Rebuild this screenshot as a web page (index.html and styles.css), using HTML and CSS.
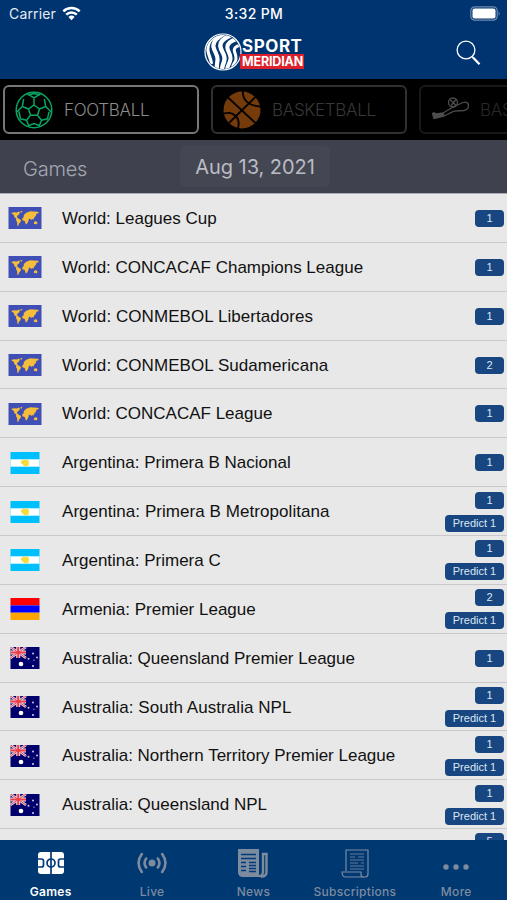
FILE: index.html
```html
<!DOCTYPE html>
<html lang="en">
<head>
<meta charset="utf-8">
<title>Sport Meridian</title>
<link rel="stylesheet" href="styles.css">
</head>
<body>
<svg class="defs" width="0" height="0" aria-hidden="true">
  <defs>
    <symbol id="world" viewBox="0 0 33 22">
      <path fill="#3f4fb5" d="M0 0h33v22H0z"/>
      <path fill="#f5bd3a" d="M2.500 6l3-.8 3 .3 1.500-1 1.500 1-1 2-1.700 1.200-.3 1.200 1.700 1.800 2.300 1.200-.5 2-1.500 1.800-.7 2.300-.9-.3-.3-3.800-1.200-1.900.5-1.400-1.800-1.200-.8-2.400zM11.500 4.500l2.500-.7-1.200 2.200zM15 9l1.200-2 2-1.500 3.800-1.300 3 .3 4.500.3 1 1.200-2.500.8-.7 2.200-1.500 1.500-1 2.200-1-.6-1.200 1-1.200-1.500-1 .5-.6 2.300-1.500 2.500-1 .5-1.100-3.300-2.300-.8-.2-1.800 1.700-1.600zM25.500 15l2-1 1.500 1.700-.6 1.800-1.400-.6-1.600.2z"/>
    </symbol>
    <symbol id="argentina" viewBox="0 0 29 22">
      <path fill="#00bfff" d="M0 0h29v22H0z"/><path fill="#fff" d="M0 7.300h29v7.400H0z"/>
      <path fill="#f7dc3b" d="M10.500 9l3-1.500 3.500.2 1.500 1.800-.3 3.700-2.700 1.200-2.300-.6-1-1.300-1.700-1.300z"/>
    </symbol>
    <symbol id="armenia" viewBox="0 0 29 22">
      <path fill="#f00" d="M0 0h29v7.400H0z"/><path fill="#00f" d="M0 7.400h29v7.300H0z"/><path fill="#ffa500" d="M0 14.700h29V22H0z"/>
    </symbol>
    <symbol id="australia" viewBox="0 0 29 22">
      <path fill="#00006d" d="M0 0h29v22H0z"/>
      <path stroke="#e6d9e8" stroke-width="2.600" d="M0 0l15.500 11M15.500 0L0 11"/>
      <path stroke="#e6d9e8" stroke-width="4" d="M7.700 0v11M0 5.500h15.500"/>
      <path stroke="#ee3e45" stroke-width="1" d="M0 0l15.500 11M15.500 0L0 11"/>
      <path stroke="#ee3e45" stroke-width="2" d="M7.700 0v11M0 5.500h15.500"/>
      <g fill="#fff"><circle cx="10.500" cy="17" r="2.300"/><g fill="#c9c9e6"><circle cx="22.500" cy="6.500" r="1"/><circle cx="18" cy="11.800" r="1"/><circle cx="26.500" cy="10.500" r="1"/><circle cx="23.500" cy="13.200" r=".6"/><circle cx="22.500" cy="19" r="1.100"/></g></g>
    </symbol>
  </defs>
</svg>
<div class="screen">
  <header class="top">
    <div class="status">
      <div class="carrier"><span>Carrier</span>
        <svg width="19" height="15" viewBox="0 0 19 15" fill="none" stroke="#fff" stroke-width="2.500"><path d="M1.300 5.400a11.800 11.800 0 0 1 16.400 0M4.200 8.600a7.600 7.600 0 0 1 10.600 0"/><path fill="#fff" stroke="none" d="M6.400 11a4.600 4.600 0 0 1 6.200 0L9.500 14.200z"/></svg>
      </div>
      <div class="time">3:32 PM</div>
      <svg class="battery" width="31" height="15" viewBox="0 0 31 15"><rect x=".8" y=".8" width="26.400" height="13.400" rx="4" fill="none" stroke="#6f8bb0" stroke-width="1.200"/><rect x="2.500" y="2.500" width="23" height="10" rx="2" fill="#fff"/><path d="M28.600 5.200q2 2.300 0 4.600z" fill="#6f8bb0"/></svg>
    </div>
    <div class="brandbar">
      <div class="brand">
        <svg class="globe" width="38" height="38" viewBox="0 0 38 38">
          <defs><clipPath id="ball"><circle cx="19" cy="19" r="17"/></clipPath></defs>
          <circle cx="19" cy="19" r="18" fill="#063570" stroke="#fff" stroke-width="1.200"/>
          <g clip-path="url(#ball)" fill="none" stroke="#fff">
            <path stroke-width="3.200" d="M14 1C6 6 3 12 4 18s3 7 3.500 13"/>
            <path stroke-width="4.200" d="M21 0C12 5 8.500 9 9.500 14s4.500 8 4 13-1 6-.5 10"/>
            <path stroke-width="4.400" d="M27 2C19 6 15.500 9 16.500 14s4.500 7 4 12-3 7-2.500 12"/>
            <path stroke-width="4" d="M33 6c-7 2-10.500 5-9.500 9.500s3.500 6 3 10.500-3.500 6-3.500 12"/>
            <path stroke-width="3" d="M37 12c-5 1-7.500 3-6.500 6.500s2 5 1.300 8.500-3.300 4-3.300 8"/>
          </g>
        </svg>
        <div class="wordmark"><span class="sport">SPORT</span><span class="meridian">MERIDIAN</span></div>
      </div>
      <svg class="search" width="25" height="26" viewBox="0 0 25 26" fill="none" stroke="#fff"><circle cx="10" cy="10" r="8.900" stroke-width="1.300"/><path stroke-width="1.300" d="M16 16.500l2 2"/><path stroke-width="2.300" d="M17 17.500l6.500 6.700"/></svg>
    </div>
  </header>
  <nav class="sports">
    <div class="sport-card active">
      <svg width="38" height="38" viewBox="0 0 38 38" fill="none" stroke="#07a563" stroke-width="1.500"><circle cx="19" cy="19" r="17.800"/><path d="M19 14l5.500 4-2 6.300h-7l-2-6.300zM19 14V6.800M24.500 18l6.200-2.500M22.500 24.300l4 5M15.500 24.300l-4 5M13.500 18l-6.200-2.500M12.500 2.800L19 6.800l6.500-4M13 4l6-1.500L25 4M30.700 15.500L29.300 8M30.700 15.500l5.500 5.500M7.300 15.500L8.700 8M7.300 15.500L1.800 21M26.500 29.300l6-1.500 1.500-7M26.500 29.300L24 35.500M11.500 29.300l-6-1.500L4 20.500M11.500 29.300l2.500 6.200M14 34.500l5-2 5 2"/></svg>
      <span>FOOTBALL</span>
    </div>
    <div class="sport-card near">
      <svg width="38" height="38" viewBox="0 0 38 38"><circle cx="19" cy="19" r="18.500" fill="#763b0a"/><path fill="none" stroke="#050302" stroke-width="1.900" d="M5 6.500l28 26M32.500 6L6 32M20 0c-1 8 5 15 17.500 15.500M1 22.500C10 20 18 26 15 37.500"/></svg>
      <span>BASKETBALL</span>
    </div>
    <div class="sport-card far">
      <svg width="38" height="38" viewBox="0 0 38 38" fill="none" stroke="#4d4d4d" stroke-width="1.300"><path d="M12 22l11-6.500 9-4c3-1 5.500.5 5.500 3s-1.500 4.500-4.500 5l-10 .7L13 25"/><circle cx="22" cy="11.500" r="4.500"/><path d="M19 8.500l6 6M25 8.500l-5 6"/><path fill="#4d4d4d" d="M1.500 22.500l1.500 5 2-.5 8-2-.8-3-7 1-2.200-1.200z"/></svg>
      <span>BASEBALL</span>
    </div>
  </nav>
  <section class="datebar"><h1>Games</h1><div class="date">Aug 13, 2021</div></section>
  <main class="leagues">
    <div class="row"><svg class="flag"><use href="#world"/></svg><span class="name">World: Leagues Cup</span><div class="badges"><b>1</b></div></div>
    <div class="row"><svg class="flag"><use href="#world"/></svg><span class="name">World: CONCACAF Champions League</span><div class="badges"><b>1</b></div></div>
    <div class="row"><svg class="flag"><use href="#world"/></svg><span class="name wide">World: CONMEBOL Libertadores</span><div class="badges"><b>1</b></div></div>
    <div class="row"><svg class="flag"><use href="#world"/></svg><span class="name wide">World: CONMEBOL Sudamericana</span><div class="badges"><b>2</b></div></div>
    <div class="row"><svg class="flag"><use href="#world"/></svg><span class="name">World: CONCACAF League</span><div class="badges"><b>1</b></div></div>
    <div class="row"><svg class="flag"><use href="#argentina"/></svg><span class="name">Argentina: Primera B Nacional</span><div class="badges"><b>1</b></div></div>
    <div class="row"><svg class="flag"><use href="#argentina"/></svg><span class="name wide">Argentina: Primera B Metropolitana</span><div class="badges"><b>1</b><b class="predict">Predict 1</b></div></div>
    <div class="row"><svg class="flag"><use href="#argentina"/></svg><span class="name">Argentina: Primera C</span><div class="badges"><b>1</b><b class="predict">Predict 1</b></div></div>
    <div class="row"><svg class="flag"><use href="#armenia"/></svg><span class="name">Armenia: Premier League</span><div class="badges"><b>2</b><b class="predict">Predict 1</b></div></div>
    <div class="row"><svg class="flag"><use href="#australia"/></svg><span class="name">Australia: Queensland Premier League</span><div class="badges"><b>1</b></div></div>
    <div class="row"><svg class="flag"><use href="#australia"/></svg><span class="name wide">Australia: South Australia NPL</span><div class="badges"><b>1</b><b class="predict">Predict 1</b></div></div>
    <div class="row"><svg class="flag"><use href="#australia"/></svg><span class="name">Australia: Northern Territory Premier League</span><div class="badges"><b>1</b><b class="predict">Predict 1</b></div></div>
    <div class="row"><svg class="flag"><use href="#australia"/></svg><span class="name">Australia: Queensland NPL</span><div class="badges"><b>1</b><b class="predict">Predict 1</b></div></div>
    <div class="row last"><div class="badges"><b>5</b></div></div>
  </main>
  <nav class="tabs">
    <div class="tab current"><svg width="26" height="22" viewBox="0 0 26 22"><rect width="26" height="22" rx="3" fill="#fff"/><g fill="none" stroke="#003a78" stroke-width="1.700"><path d="M13 0v22M0 7h3.500q2 0 2 2v4q0 2-2 2H0M26 7h-3.500q-2 0-2 2v4q0 2 2 2H26"/><circle cx="13" cy="11" r="4"/></g></svg><span>Games</span></div>
    <div class="tab"><svg width="30" height="22" viewBox="0 0 30 22" fill="none" stroke="#7d8b9f" stroke-width="2.600" stroke-linecap="round"><circle cx="15" cy="11" r="3.500" fill="#7d8b9f" stroke="none"/><path d="M9.200 6.500q-3.400 4.500 0 9M4.800 2q-6.500 9 0 18M20.800 6.500q3.400 4.500 0 9M25.200 2q6.500 9 0 18"/></svg><span>Live</span></div>
    <div class="tab"><svg width="30" height="29" viewBox="0 0 30 29"><path fill="#7d8b9f" d="M0 0h21v28H5q-5 0-5-5z"/><path fill="none" stroke="#003a78" stroke-width="1.500" d="M3 5.500h15M3 9.500h15M3 13.500h5M3 17.500h5M3 21.500h5M11 13.500h7M11 16.500h7M11 19.500h7M11 22.500h7"/><path fill="none" stroke="#7d8b9f" stroke-width="2.400" d="M20 26.500q4 2 5-3V5h3.500v19q-1 4-5.500 3.500"/></svg><span>News</span></div>
    <div class="tab"><svg width="28" height="29" viewBox="0 0 28 29" fill="none" stroke="#7d8b9f" stroke-width="1.200"><path d="M5 22V1h22v24q0 3-3 3H5q-4 0-4-5h19v3q1 3 4 2"/><path stroke-width=".8" d="M9 5h14M9 8h5M17 8h6M9 11h14M9 14h8M20 14h3M9 17h14M9 20h14"/></svg><span>Subscriptions</span></div>
    <div class="tab more"><svg width="26" height="6" viewBox="0 0 26 6" fill="#7d8b9f"><circle cx="3" cy="3" r="2.700"/><circle cx="13" cy="3" r="2.700"/><circle cx="23" cy="3" r="2.700"/></svg><span>More</span></div>
  </nav>
</div>
</body>
</html>
```
FILE: styles.css
```css
* { box-sizing: border-box; }
body { margin: 0; font-family: "Liberation Sans", Arial, sans-serif; }
.defs { display: block; height: 0; }
svg { display: block; flex: none; }
.screen { width: 507px; height: 900px; overflow: hidden; display: flex; flex-direction: column; background: #e8e8e8; }

.top { flex: none; height: 79px; background: #003470; color: #fff; font-family: Inter, sans-serif; }
.status { height: 28px; display: grid; grid-template-columns: 1fr auto 1fr; align-items: center; padding: 0 6px 2px 9px; font-size: 14px; }
.carrier { display: flex; align-items: center; gap: 6px; letter-spacing: .15px; color: #e3ebf5; }
.time { font-weight: 500; font-size: 14px; letter-spacing: .35px; margin-left: -2px; }
.battery { justify-self: end; }
.brandbar { height: 51px; display: flex; align-items: flex-start; padding: 5px 26px 0 204px; }
.brand { display: flex; }
.wordmark { display: flex; flex-direction: column; align-items: flex-start; padding-top: 5px; }
.sport { font-size: 17px; line-height: 16px; font-weight: 700; letter-spacing: .55px; }
.meridian { font-size: 12.500px; line-height: 15px; height: 15px; font-weight: 700; background: #dc202c; padding: 0 1px 0 2px; margin-left: -2px; letter-spacing: -.15px; }
.search { margin: 7px 0 0 auto; }

.sports { flex: none; height: 61px; display: flex; gap: 12px; padding: 6px 0 0 3px; background: #000; overflow: hidden; font-family: Inter, sans-serif; }
.sport-card { flex: none; width: 196px; height: 49px; border: 2px solid #777; border-radius: 6px; display: flex; align-items: center; gap: 11px; padding-left: 10px; font-size: 17px; letter-spacing: -.3px; font-weight: 300; color: #8b8b8b; }
.near { border-color: #303030; color: #383838; }
.far { border-color: #181818; color: #282828; }

.datebar { flex: none; height: 54px; display: grid; grid-template-columns: 180px 150px 1fr; padding-top: 6px; background: #3f424e; border-bottom: 1px solid #a9abbb; font-family: Inter, sans-serif; }
.datebar h1 { margin: 0; padding-left: 23px; font-size: 20px; letter-spacing: -.2px; font-weight: 300; line-height: 46px; color: #a4a7b2; }
.date { height: 41px; border-radius: 5px; background: #444752; color: #babcc5; font-size: 20px; letter-spacing: -.05px; line-height: 42px; text-align: center; }

.leagues { flex: 1; min-height: 0; overflow: hidden; }
.row { height: 48.870px; display: grid; grid-template-columns: 50px 1fr auto; align-items: center; gap: 12px; padding-right: 3px; border-bottom: 1.500px solid #c9c9cb; }
.flag { width: 34px; height: 22px; justify-self: center; margin-top: 1px; }
.name { font-size: 17px; color: #111; white-space: nowrap; padding-top: 2px; }
.wide { letter-spacing: .06px; }
.badges { display: flex; flex-direction: column; align-items: flex-end; gap: 6px; padding-top: 1px; }
.badges b { min-width: 29px; height: 17px; border-radius: 4px; background: #174680; color: #dce7f5; font-size: 11px; font-weight: 400; line-height: 17px; text-align: center; }
.badges .predict { width: 59px; }
.last { grid-template-columns: 1fr; align-items: start; padding-top: 3px; }

.tabs { flex: none; height: 60px; display: grid; grid-template-columns: repeat(5, 1fr); background: #003872; color: #7d8b9f; font-family: Inter, sans-serif; }
.tab { height: 60px; display: grid; grid-template-rows: 46px 12px; justify-items: center; align-items: center; font-size: 12px; font-weight: 500; line-height: 12px; letter-spacing: .3px; }
.tab span { margin-top: -1px; }
.current { color: #fff; font-weight: 600; }
.more svg { margin-top: 8px; }
```
